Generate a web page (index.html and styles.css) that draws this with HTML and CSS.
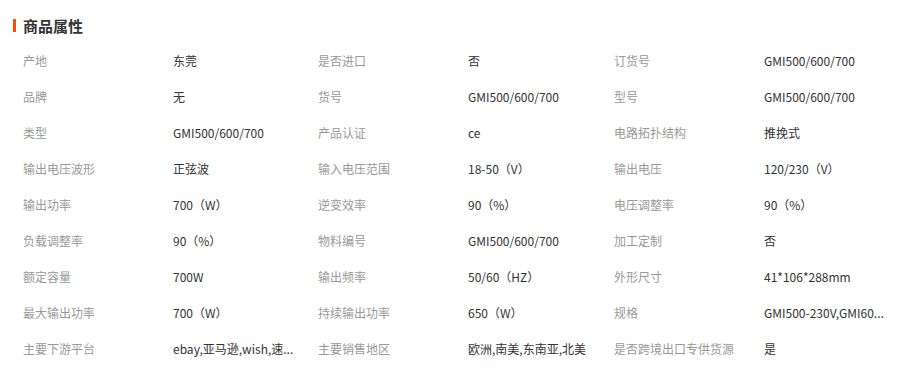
FILE: index.html
```html
<!DOCTYPE html>
<html lang="zh-CN">
<head>
<meta charset="utf-8">
<title>商品属性</title>
<link rel="stylesheet" href="styles.css">
</head>
<body>
<div class="attrs">
  <h2 class="title">商品属性</h2>
  <div class="grid">
    <div class="label">产地</div><div class="value">东莞</div>
    <div class="label">是否进口</div><div class="value">否</div>
    <div class="label">订货号</div><div class="value">GMI500/600/700</div>

    <div class="label">品牌</div><div class="value">无</div>
    <div class="label">货号</div><div class="value">GMI500/600/700</div>
    <div class="label">型号</div><div class="value">GMI500/600/700</div>

    <div class="label">类型</div><div class="value">GMI500/600/700</div>
    <div class="label">产品认证</div><div class="value">ce</div>
    <div class="label">电路拓扑结构</div><div class="value">推挽式</div>

    <div class="label">输出电压波形</div><div class="value">正弦波</div>
    <div class="label">输入电压范围</div><div class="value">18-50（V）</div>
    <div class="label">输出电压</div><div class="value">120/230（V）</div>

    <div class="label">输出功率</div><div class="value">700（W）</div>
    <div class="label">逆变效率</div><div class="value">90（%）</div>
    <div class="label">电压调整率</div><div class="value">90（%）</div>

    <div class="label">负载调整率</div><div class="value">90（%）</div>
    <div class="label">物料编号</div><div class="value">GMI500/600/700</div>
    <div class="label">加工定制</div><div class="value">否</div>

    <div class="label">额定容量</div><div class="value">700W</div>
    <div class="label">输出频率</div><div class="value">50/60（HZ）</div>
    <div class="label">外形尺寸</div><div class="value">41*106*288mm</div>

    <div class="label">最大输出功率</div><div class="value">700（W）</div>
    <div class="label">持续输出功率</div><div class="value">650（W）</div>
    <div class="label">规格</div><div class="value" title="GMI500-230V,GMI600-230V,GMI700-230V">GMI500-230V,GMI60...</div>

    <div class="label">主要下游平台</div><div class="value" title="ebay,亚马逊,wish,速卖通">ebay,亚马逊,wish,速...</div>
    <div class="label">主要销售地区</div><div class="value">欧洲,南美,东南亚,北美</div>
    <div class="label">是否跨境出口专供货源</div><div class="value">是</div>
  </div>
</div>
</body>
</html>
```
FILE: styles.css
```css
html, body {
  margin: 0;
  padding: 0;
  background: #fff;
}
body {
  font-family: "Noto Sans CJK SC", "Noto Sans", sans-serif;
  font-size: 12px;
  color: #333;
}
.attrs {
  padding: 18px 0 0 13px;
}
.title {
  margin: 0;
  display: flex;
  align-items: center;
  height: 15px;
  font-size: 15px;
  font-weight: bold;
  color: #333;
  line-height: 15px;
}
.title::before {
  content: "";
  display: block;
  width: 3px;
  height: 13px;
  background: #ff4a00;
  margin-right: 7px;
}
.grid {
  display: grid;
  grid-template-columns: 150px 145px 150px 146px 150px 140px;
  grid-auto-rows: 36px;
  margin-top: 9px;
  padding-left: 10px;
}
.label, .value {
  display: flex;
  align-items: center;
  white-space: nowrap;
}
.label {
  color: #999;
}
.value {
  color: #333;
}
```
